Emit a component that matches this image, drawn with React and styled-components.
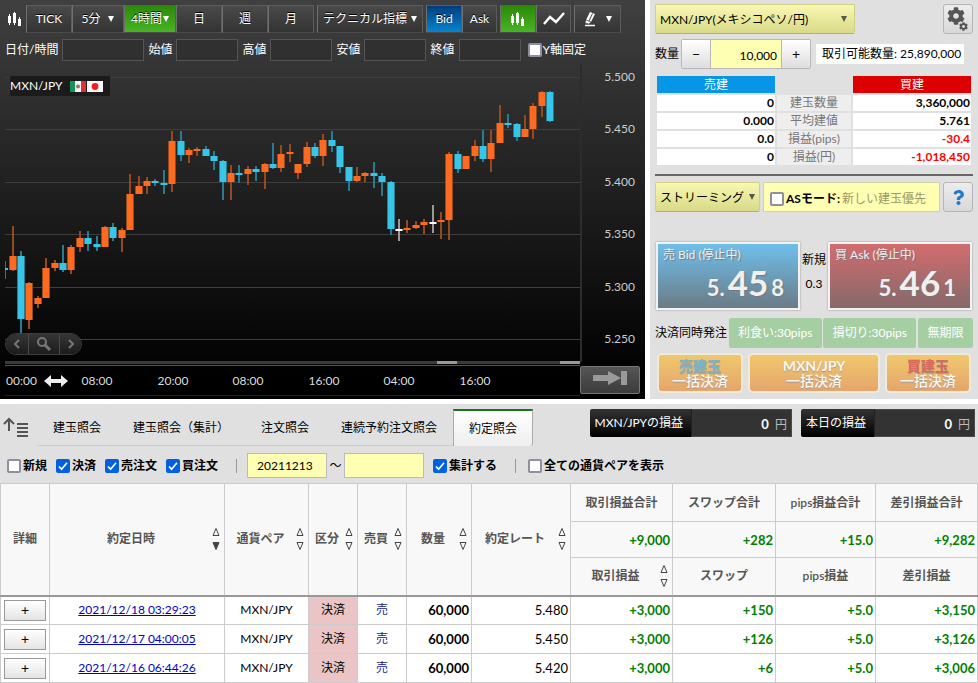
import React from "react";
import styled, { createGlobalStyle } from "styled-components";
import { FaCog, FaQuestion } from "react-icons/fa";

const GlobalStyle = createGlobalStyle`
  * {
    box-sizing: border-box;
  }
  body {
    margin: 0;
    background: #fff;
    color: #000;
    font-family: Lato, "Noto Sans CJK JP", sans-serif;
    font-size: 12px;
    line-height: 16px;
  }
  button,
  input,
  select {
    font: inherit;
    color: inherit;
    margin: 0;
  }
`;

const Page = styled.div`
  display: flex;
  flex-direction: column;
  gap: 5px;
`;
const Top = styled.div`
  display: flex;
  gap: 5px;
`;

/* chart panel */
const ChartPanel = styled.section`
  flex: 1;
  min-width: 0;
  display: flex;
  flex-direction: column;
  background: linear-gradient(#404040, #2b2b2b 30%, #000 95%);
  color: #fff;
`;
const Toolbar = styled.div`
  display: flex;
  align-items: center;
  gap: 3px;
  padding: 5px 5px 0 7px;
`;
const ToolGroup = styled.div`
  display: flex;
`;
const toolColors = {
  gray: "linear-gradient(#4a4a4a, #333)",
  green: "linear-gradient(#2b8a08, #48b524)",
  blue: "linear-gradient(#003d80, #0784cf)",
};
const ToolButton = styled.button`
  display: flex;
  align-items: center;
  justify-content: center;
  gap: ${({ $gap }) => $gap || 4}px;
  width: ${({ $w }) => $w}px;
  height: 28px;
  padding: 0;
  border: 1px solid #5c5c5c;
  border-left-color: #707070;
  border-bottom-color: #4a4a4a;
  background: ${({ $tone }) => toolColors[$tone || "gray"]};
  color: #fff;
  white-space: nowrap;
  text-shadow: 0 -1px 0 #000;
`;
const OhlcRow = styled.div`
  display: flex;
  align-items: center;
  padding: 6px 5px 0 0;
`;
const OhlcLabel = styled.label`
  display: flex;
  align-items: center;
  gap: 4px;
  margin-left: 5px;
  white-space: nowrap;
  & + & {
    margin-left: 4px;
  }
`;
const OhlcInput = styled.input`
  width: ${({ $w }) => $w || 62}px;
  height: 22px;
  border: 1px solid #555;
  background: #303030;
`;
const Check = styled.input`
  appearance: none;
  flex: none;
  width: 14px;
  height: 14px;
  border: 2px solid #8f8f9d;
  border-radius: 2px;
  background: #fff;
  &:checked {
    border-color: #0060df;
    background: #0060df
      url("data:image/svg+xml,%3Csvg xmlns='http://www.w3.org/2000/svg' viewBox='0 0 10 10'%3E%3Cpath d='M1 5.5l2.6 2.7L9 1.8' fill='none' stroke='white' stroke-width='1.7'/%3E%3C/svg%3E")
      center / 10px no-repeat;
  }
`;
const FixLabel = styled.label`
  display: flex;
  align-items: center;
  gap: 1px;
  margin-left: 7px;
`;
const ChartBody = styled.div`
  position: relative;
  padding-top: 4px;
`;
const ChartSvg = styled.svg`
  display: block;
  width: 100%;
`;
const PairTag = styled.div`
  position: absolute;
  left: 10px;
  top: 15px;
  display: flex;
  align-items: center;
  gap: 8px;
  height: 20px;
  padding-right: 7px;
  background: #1b1b1b;
`;
const ZoomBar = styled.div`
  position: absolute;
  left: 5px;
  bottom: 11px;
  display: flex;
  border: 1px solid #3c3c3c;
  border-radius: 11px;
  overflow: hidden;
`;
const ZoomButton = styled.button`
  display: flex;
  align-items: center;
  justify-content: center;
  width: ${({ $w }) => $w}px;
  height: 20px;
  padding: 0;
  border: 0;
  border-left: 1px solid #484848;
  background: linear-gradient(#353535, #1c1c1c);
  &:first-child {
    border-left: 0;
  }
`;
const TimeRow = styled.div`
  display: flex;
  align-items: flex-start;
  padding: 0 5px 3px 0;
`;
const TimeScale = styled.svg`
  flex: 1;
  min-width: 0;
  display: block;
`;
const LatestButton = styled.button`
  width: 60px;
  height: 28px;
  padding: 0;
  border: 1px solid #777;
  border-radius: 2px;
  background: linear-gradient(#555, #3c3c3c);
`;

/* order panel */
const OrderPanel = styled.section`
  width: 328px;
  flex: none;
  padding: 4px 5px 5px;
  background: #e0e0e0;
`;
const OrderRow = styled.div`
  display: flex;
  align-items: center;
  justify-content: ${({ $spread }) => ($spread ? "space-between" : "flex-start")};
  margin-top: ${({ $top }) => $top || 0}px;
  padding: 0 ${({ $inset }) => $inset || 0}px;
`;
const SelectWrap = styled.label`
  display: flex;
  position: relative;
  &::after {
    content: "";
    position: absolute;
    right: ${({ $arrow }) => $arrow}px;
    top: 12px;
    border: 3px solid transparent;
    border-top: 6px solid #555;
    border-bottom: 0;
  }
`;
const Select = styled.select`
  appearance: none;
  width: ${({ $w }) => $w}px;
  height: 30px;
  padding: 2px 4px 0;
  border: 1px solid #d0d080;
  border-bottom-color: #aaa;
  border-radius: 2px;
  background: linear-gradient(#f8f8b4, #d9d988);
`;
const IconButton = styled.button`
  display: flex;
  align-items: center;
  justify-content: center;
  width: 30px;
  height: 30px;
  padding: 0;
  border: 1px solid #b5b5b5;
  border-radius: 3px;
  background: linear-gradient(#ededed, #d8d8d8);
`;
const Stepper = styled.div`
  display: flex;
  margin: 0 5px 0 2px;
  border: 1px solid #b8b8b8;
  border-radius: 2px;
`;
const StepButton = styled.button`
  width: 28px;
  height: 28px;
  padding: 0;
  border: 0;
  background: linear-gradient(#fff, #dedede);
  font-size: 14px;
`;
const QtyInput = styled.input`
  width: 72px;
  height: 28px;
  padding: 2px 4px 0;
  border: 0;
  border-left: 1px solid #b8b8b8;
  border-right: 1px solid #b8b8b8;
  background: #ffffb4;
  text-align: right;
`;
const Available = styled.div`
  padding: 2px 3px 2px 6px;
  background: #fff;
  white-space: nowrap;
`;
const PositionTable = styled.table`
  width: 100%;
  margin-top: 5px;
  border-collapse: separate;
  border-spacing: 2px;
  table-layout: fixed;
  line-height: 16px;
  th,
  td {
    height: 16px;
    padding: 0;
    overflow: hidden;
    font-weight: normal;
  }
`;
const SideHead = styled.th`
  background: ${({ $buy }) => ($buy ? "#dc0000" : "#0796e6")};
  color: #fff;
  line-height: 17px;
`;
const PositionCell = styled.td`
  background: #fff;
  color: ${({ $minus }) => ($minus ? "#f00" : "#000")};
  text-align: right;
  b {
    padding-right: 1px;
    font-weight: 700;
  }
`;
const PositionName = styled.th`
  background: #eee;
  color: #777;
`;
const Rule = styled.hr`
  height: 2px;
  margin: 7px 0 6px;
  border: 0;
  background: #666;
`;
const AsMode = styled.label`
  display: flex;
  align-items: center;
  width: 177px;
  height: 30px;
  padding: 3px 6px 0;
  border: 1px solid #d2d2a8;
  background: #ffffb4;
  color: #999966;
  white-space: nowrap;
  b {
    margin: 0 2px;
    color: #000;
  }
`;
const PriceRow = styled.div`
  display: flex;
  justify-content: space-between;
  margin: 30px 0 8px;
  padding: 0 1px;
`;
const PriceButton = styled.button`
  width: 144px;
  height: 68px;
  padding: 3px 5px;
  border: 2px solid #f2f2f2;
  background: ${({ $buy }) =>
    $buy ? "linear-gradient(#d26c6e, #86696a)" : "linear-gradient(#6fbfeb, #6b7b86)"};
  box-shadow: 0 0 2px #999;
  color: #f0f0f0;
  text-align: left;
  text-shadow: 1px 1px 1px #777;
`;
const Price = styled.div`
  display: flex;
  justify-content: flex-end;
  align-items: baseline;
  gap: 3px;
  padding-right: 9px;
  font-size: 22px;
  font-weight: 700;
  line-height: 38px;
`;
const BigDigits = styled.span`
  font-size: 35px;
`;
const Spread = styled.div`
  display: flex;
  flex-direction: column;
  align-items: center;
  gap: 8px;
  padding-top: 10px;
  white-space: nowrap;
`;
const CloseOption = styled.button`
  width: ${({ $w }) => $w}px;
  height: 30px;
  padding: 0;
  border: 0;
  border-radius: 2px;
  background: #a6cea3;
  color: #fff;
  white-space: nowrap;
`;
const CloseButton = styled.button`
  display: flex;
  flex-direction: column;
  align-items: center;
  justify-content: center;
  width: ${({ $w }) => $w}px;
  height: 40px;
  padding: 0;
  border: 2px solid #f0ead8;
  border-radius: 5px;
  background: linear-gradient(#f0c86c, #e6a56c);
  color: #fcf7ec;
  font-size: 14px;
  font-weight: 500;
  line-height: 15px;
  text-shadow: 0 1px 1px #999;
  strong {
    color: ${({ $accent }) => $accent || "#fcf7ec"};
    font-weight: 700;
  }
`;

/* list panel */
const ListPanel = styled.section`
  background: #e0e0e0;
`;
const TabRow = styled.div`
  display: flex;
  align-items: flex-start;
  padding: 5px 3px 0 3px;
`;
const Tabs = styled.nav`
  display: flex;
  margin-left: 7px;
`;
const Tab = styled.button`
  height: 37px;
  padding: 1px 16px 0;
  border: 0;
  border-bottom: 1px solid #ccc;
  background: none;
  white-space: nowrap;
  ${({ $active }) =>
    $active &&
    `
    padding: 0 15px;
    border: 1px solid #aaa;
    border-top: 2px solid #1c721c;
    border-bottom: 0;
    border-radius: 0 0 3px 0;
    background: linear-gradient(#fff, #eee);
  `}
`;
const Totals = styled.div`
  display: flex;
  gap: 9px;
  margin-left: auto;
`;
const Total = styled.div`
  display: flex;
  height: 28px;
  border-radius: 2px;
  background: linear-gradient(#333, #000);
  color: #fff;
  line-height: 28px;
  white-space: nowrap;
`;
const TotalName = styled.span`
  padding: 0 8px 0 5px;
`;
const TotalValue = styled.span`
  width: 101px;
  padding-right: 4px;
  border: 1px solid #4a4a4a;
  border-left-color: #222;
  background: #333;
  color: #bbb;
  text-align: right;
  b {
    margin-right: 3px;
    color: #fff;
    font-size: 13px;
  }
`;
const FilterRow = styled.div`
  display: flex;
  align-items: center;
  height: 37px;
  padding: 2px 7px 0;
`;
const DateInput = styled.input`
  width: 80px;
  height: 25px;
  padding: 0 9px;
  border: 1px solid #bbb;
  background: #ffffb4;
`;
const FilterLabel = styled.label`
  display: flex;
  align-items: center;
  gap: 2px;
  margin-right: 9px;
  font-weight: 600;
  white-space: nowrap;
  ${DateInput} + & {
    margin-left: 9px;
  }
`;
const Divider = styled.span`
  width: 1px;
  height: 14px;
  margin: 0 ${({ $right }) => $right}px 0 9px;
  background: #999;
`;
const Tilde = styled.span`
  width: 17px;
  text-align: center;
`;
const Table = styled.table`
  width: 100%;
  border-collapse: collapse;
  table-layout: fixed;
  background: #fff;
`;
const Th = styled.th`
  height: ${({ $h }) => $h || 36}px;
  padding: 0;
  border: 1px solid #ccc;
  border-bottom: ${({ $last }) => ($last ? "2px solid #999" : "1px solid #ccc")};
  background: #f8f8f8;
  color: #555;
  font-weight: 600;
  white-space: nowrap;
`;
const ThInner = styled.div`
  display: flex;
  align-items: center;
  justify-content: center;
`;
const ThText = styled.span`
  flex: 1;
`;
const SortIcon = styled.svg`
  flex: none;
  width: 8px;
  height: 24px;
  margin-right: 4px;
`;
const Td = styled.td`
  height: ${({ $h }) => $h || 29}px;
  padding: 0 2px;
  border: 1px solid #ccc;
  background: ${({ $bg }) => $bg || "#fff"};
  color: ${({ $color }) => $color || "#000"};
  font-size: ${({ $number }) => ($number ? 13 : 12)}px;
  font-weight: ${({ $bold }) => ($bold ? 700 : 400)};
  text-align: ${({ $number }) => ($number ? "right" : "center")};
  white-space: nowrap;
  a {
    color: #0000c8;
  }
`;
const DetailButton = styled.button`
  display: block;
  width: 42px;
  height: 21px;
  margin: 0 auto;
  padding: 0;
  border: 1px solid #999;
  background: linear-gradient(#fff, #e4e4e4);
  font-size: 14px;
  line-height: 16px;
`;

// colour, high, body top, body bottom, low
const candles = [
  ["o", 226, 256, 270, 271], ["b", 251, 256, 319, 336], ["o", 282, 283, 320, 329],
  ["o", 296, 298, 304, 308], ["o", 258, 268, 298, 298], ["o", 260, 263, 268, 271],
  ["b", 245, 263, 270, 272], ["o", 245, 247, 270, 274], ["o", 231, 238, 247, 252],
  ["b", 231, 238, 244, 251], ["b", 236, 244, 247, 251], ["o", 226, 227, 247, 247],
  ["b", 223, 227, 238, 241], ["o", 228, 230, 238, 252], ["o", 174, 194, 230, 230],
  ["o", 176, 186, 194, 194], ["o", 177, 181, 186, 194], ["b", 179, 181, 183, 186],
  ["b", 170, 183, 185, 194], ["o", 131, 141, 184, 192], ["b", 131, 141, 155, 161],
  ["o", 148, 150, 155, 163], ["o", 147, 149, 151, 156], ["b", 146, 149, 156, 156],
  ["b", 151, 156, 161, 170], ["b", 160, 161, 182, 200], ["o", 165, 173, 182, 200],
  ["b", 165, 173, 175, 183], ["o", 166, 169, 174, 185], ["b", 166, 169, 172, 181],
  ["o", 163, 164, 172, 189], ["b", 143, 164, 168, 169], ["o", 145, 154, 168, 172],
  ["o", 144, 152, 154, 162], ["o", 164, 164, 173, 179], ["o", 142, 147, 164, 167],
  ["b", 143, 147, 156, 158], ["o", 134, 140, 156, 166], ["b", 131, 140, 146, 152],
  ["b", 146, 146, 167, 173], ["b", 167, 167, 181, 191], ["o", 167, 176, 181, 182],
  ["o", 172, 173, 176, 182], ["b", 162, 173, 176, 188], ["b", 173, 176, 182, 196],
  ["b", 181, 182, 229, 235], ["w", 219, 229, 231, 241], ["o", 220, 228, 230, 233],
  ["o", 221, 225, 228, 229], ["o", 219, 222, 225, 234], ["w", 205, 222, 224, 233],
  ["o", 212, 220, 222, 239], ["o", 152, 154, 220, 240], ["b", 151, 154, 169, 173],
  ["o", 156, 156, 169, 169], ["o", 140, 146, 156, 161], ["b", 130, 146, 159, 162],
  ["o", 130, 143, 159, 172], ["o", 105, 123, 143, 143], ["b", 114, 123, 125, 128],
  ["b", 123, 124, 137, 141], ["o", 115, 129, 137, 137], ["o", 103, 106, 129, 139],
  ["o", 91, 92, 106, 117], ["b", 91, 92, 121, 122],
];
const bodyColors = { o: "#ff6a21", b: "#37c6e8", w: "#fff" };
const wickColors = { o: "#94491f", b: "#2b7b90", w: "#999" };

const prices = ["5.500", "5.450", "5.400", "5.350", "5.300", "5.250"];
const times = ["08:00", "20:00", "08:00", "16:00", "04:00", "16:00"];

const Chart = () => (
  <ChartSvg viewBox="0 65 645 301">
    {prices.map((price, i) => {
      const y = Math.round(77 + i * 52.4);
      return (
        <g key={price}>
          <rect x="5" y={y} width="576" height="1" fill="#3e3e3e" />
          <text x="635" y={y + 4} textAnchor="end" fontSize="12" fill="#ccc">
            {price}
          </text>
        </g>
      );
    })}
    <rect x="580" y="65" width="2" height="297" fill="#2c2c2c" />
    <rect x="5" y="261" width="1" height="18" fill={wickColors.b} />
    <rect x="5" y="268" width="3" height="2" fill={bodyColors.b} />
    {candles.map(([c, high, top, bottom, low], i) => {
      const x = Math.floor(13 + i * 8.4);
      return (
        <g key={i}>
          <rect x={x - 1} y={high} width="2" height={low - high} fill={wickColors[c]} />
          <rect x={x - 4} y={top} width="8" height={bottom - top} fill={wickColors[c]} />
          <rect x={x - 3} y={top} width="6" height={bottom - top} fill={bodyColors[c]} />
        </g>
      );
    })}
    <rect x="5" y="361" width="575" height="3" fill="#393939" />
    <rect x="5" y="365" width="575" height="1" fill="#555" />
    <rect x="437" y="361" width="20" height="3" fill="#999" />
    <rect x="560" y="361" width="20" height="3" fill="#999" />
  </ChartSvg>
);

const Candles = () => (
  <svg width="16" height="18" viewBox="0 0 16 18" fill="#fff">
    <path d="M2 4h1v2h1v7H3v2H2v-2H1V6h1zM7 2h1v1h1v10H8v2H7v-2H6V3h1zM12 7h1v2h1v7h-3V9h1z" />
  </svg>
);

const Caret = () => (
  <svg width="6" height="6" viewBox="0 0 6 6" fill="#fff">
    <path d="M0 0h6L3 6z" />
  </svg>
);

const Flags = () => (
  <svg width="33" height="11" viewBox="0 0 33 11">
    <rect width="5" height="11" fill="#15935a" />
    <rect x="5" width="6" height="11" fill="#f4f4f4" />
    <rect x="11" width="5" height="11" fill="#e0313a" />
    <circle cx="8" cy="5.5" r="2" fill="#8f7a55" />
    <rect x="17" width="16" height="11" fill="#f8f8f8" />
    <circle cx="25" cy="5.5" r="3.4" fill="#f02020" />
  </svg>
);

const Sort = ({ down }) => (
  <SortIcon viewBox="0 0 8 24" fill="none" stroke="#444">
    <path d="M1 8.5h6L4 1.5z" />
    <path d="M1 15.5h6L4 22.5z" fill={down ? "#444" : "none"} />
  </SortIcon>
);

const positions = [
  ["0", "建玉数量", "3,360,000"],
  ["0.000", "平均建値", "5.761"],
  ["0.0", "損益(pips)", "-30.4"],
  ["0", "損益(円)", "-1,018,450"],
];

const sortHeads = [
  { name: "約定日時", down: true },
  { name: "通貨ペア" },
  { name: "区分" },
  { name: "売買" },
  { name: "数量" },
  { name: "約定レート" },
];
const widths = [49, 175, 84, 49, 49, 65, 99, 102, 103, 100];

const trades = [
  { date: "2021/12/18 03:29:23", rate: "5.480", pl: ["+3,000", "+150", "+5.0", "+3,150"] },
  { date: "2021/12/17 04:00:05", rate: "5.450", pl: ["+3,000", "+126", "+5.0", "+3,126"] },
  { date: "2021/12/16 06:44:26", rate: "5.420", pl: ["+3,000", "+6", "+5.0", "+3,006"] },
];

const App = () => {
  return (
    <Page>
      <GlobalStyle />
      <Top>
        <ChartPanel>
          <Toolbar>
            <Candles />
            <ToolGroup>
              <ToolButton $w={46}>TICK</ToolButton>
              <ToolButton $w={52} $gap={8}>5分 <Caret /></ToolButton>
              <ToolButton $w={52} $gap={1} $tone="green">4時間 <Caret /></ToolButton>
              <ToolButton $w={46}>日</ToolButton>
              <ToolButton $w={46}>週</ToolButton>
              <ToolButton $w={46}>月</ToolButton>
            </ToolGroup>
            <ToolButton $w={106}>テクニカル指標 <Caret /></ToolButton>
            <ToolGroup>
              <ToolButton $w={36} $tone="blue">Bid</ToolButton>
              <ToolButton $w={35}>Ask</ToolButton>
            </ToolGroup>
            <ToolGroup>
              <ToolButton $w={36} $tone="green" aria-label="ローソク足"><Candles /></ToolButton>
              <ToolButton $w={35} aria-label="ライン">
                <svg width="22" height="14" viewBox="0 0 22 14" fill="none" stroke="#fff" strokeWidth="2.4">
                  <path d="M1 12l6-7 6 5 8-9" />
                </svg>
              </ToolButton>
            </ToolGroup>
            <ToolButton $w={47} $gap={8} aria-label="描画">
              <svg width="14" height="16" viewBox="0 0 14 16">
                <path d="M6 1l5 2-4 8-5-2z" fill="#fff" />
                <path d="M8.500 2.500L5 10" stroke="#444" />
                <path d="M2 9l-1 3 4 1 2-2z" fill="#fff" stroke="#444" strokeWidth="0.6" />
                <path d="M1 14.500h10" stroke="#fff" strokeWidth="1.5" />
              </svg>
              <Caret />
            </ToolButton>
          </Toolbar>
          <OhlcRow>
            <OhlcLabel>日付/時間<OhlcInput $w={82} /></OhlcLabel>
            <OhlcLabel>始値<OhlcInput /></OhlcLabel>
            <OhlcLabel>高値<OhlcInput /></OhlcLabel>
            <OhlcLabel>安値<OhlcInput /></OhlcLabel>
            <OhlcLabel>終値<OhlcInput /></OhlcLabel>
            <FixLabel><Check type="checkbox" />Y軸固定</FixLabel>
          </OhlcRow>
          <ChartBody>
            <Chart />
            <PairTag>MXN/JPY <Flags /></PairTag>
            <ZoomBar>
              <ZoomButton $w={22} aria-label="前へ">
                <svg width="8" height="12" fill="none" stroke="#777" strokeWidth="2"><path d="M6 2L2 6l4 4" /></svg>
              </ZoomButton>
              <ZoomButton $w={31} aria-label="ズーム">
                <svg width="16" height="16" fill="none" stroke="#777" strokeWidth="2">
                  <circle cx="6" cy="6" r="4" /><path d="M9 9l5 5" strokeWidth="3" />
                </svg>
              </ZoomButton>
              <ZoomButton $w={22} aria-label="次へ">
                <svg width="8" height="12" fill="none" stroke="#777" strokeWidth="2"><path d="M2 2l4 4-4 4" /></svg>
              </ZoomButton>
            </ZoomBar>
          </ChartBody>
          <TimeRow>
            <TimeScale viewBox="0 0 580 30" fontSize="12" fill="#ddd">
              <text x="6" y="19">00:00</text>
              <path d="M44 15l7-6v4h10V9l7 6-7 6v-4H51v4z" fill="#eee" />
              {times.map((time, i) => (
                <text key={i} x={97 + Math.round(i * 75.5)} y="19" textAnchor="middle">
                  {time}
                </text>
              ))}
              <rect x="5" y="29" width="575" height="1" fill="#222" />
            </TimeScale>
            <LatestButton aria-label="最新">
              <svg width="36" height="16" fill="#999">
                <path d="M1 5h15V1l13 7-13 7v-4H1zM29 1h6v14h-6z" />
              </svg>
            </LatestButton>
          </TimeRow>
        </ChartPanel>

        <OrderPanel>
          <OrderRow $spread>
            <SelectWrap $arrow={8}>
              <Select $w={200} aria-label="通貨ペア"><option>MXN/JPY(メキシコペソ/円)</option></Select>
            </SelectWrap>
            <IconButton aria-label="設定">
              <svg width="22" height="26" viewBox="0 0 22 26" color="#555">
                <FaCog x="0" y="1" size={18} />
                <FaCog x="12" y="16" size={9} />
              </svg>
            </IconButton>
          </OrderRow>
          <OrderRow $top={5}>
            <label htmlFor="qty">数量</label>
            <Stepper>
              <StepButton>−</StepButton>
              <QtyInput id="qty" defaultValue="10,000" />
              <StepButton>+</StepButton>
            </Stepper>
            <Available>取引可能数量: 25,890,000</Available>
          </OrderRow>
          <PositionTable>
            <colgroup>
              <col width="118" />
              <col width="74" />
              <col width="118" />
            </colgroup>
            <thead>
              <tr>
                <SideHead>売建</SideHead>
                <th />
                <SideHead $buy>買建</SideHead>
              </tr>
            </thead>
            <tbody>
              {positions.map(([sell, name, buy]) => (
                <tr key={name}>
                  <PositionCell><b>{sell}</b></PositionCell>
                  <PositionName>{name}</PositionName>
                  <PositionCell $minus={buy.startsWith("-")}><b>{buy}</b></PositionCell>
                </tr>
              ))}
            </tbody>
          </PositionTable>
          <Rule />
          <OrderRow $spread>
            <SelectWrap $arrow={5}>
              <Select $w={105} aria-label="注文方式"><option>ストリーミング</option></Select>
            </SelectWrap>
            <AsMode>
              <Check type="checkbox" />
              <b>ASモード:</b>新しい建玉優先
            </AsMode>
            <IconButton aria-label="ヘルプ"><FaQuestion size={15} color="#2478d0" /></IconButton>
          </OrderRow>
          <PriceRow>
            <PriceButton>
              売 Bid (停止中)
              <Price><span>5.</span><BigDigits>45</BigDigits><span>8</span></Price>
            </PriceButton>
            <Spread><span>新規</span><span>0.3</span></Spread>
            <PriceButton $buy>
              買 Ask (停止中)
              <Price><span>5.</span><BigDigits>46</BigDigits><span>1</span></Price>
            </PriceButton>
          </PriceRow>
          <OrderRow $spread>
            決済同時発注
            <CloseOption $w={93}>利食い:30pips</CloseOption>
            <CloseOption $w={93}>損切り:30pips</CloseOption>
            <CloseOption $w={55}>無期限</CloseOption>
          </OrderRow>
          <OrderRow $spread $top={5} $inset={2}>
            <CloseButton $w={86} $accent="#7db4c4"><strong>売建玉</strong><span>一括決済</span></CloseButton>
            <CloseButton $w={132}><strong>MXN/JPY</strong><span>一括決済</span></CloseButton>
            <CloseButton $w={86} $accent="#d86a5c"><strong>買建玉</strong><span>一括決済</span></CloseButton>
          </OrderRow>
        </OrderPanel>
      </Top>

      <ListPanel>
        <TabRow>
          <svg width="27" height="32" viewBox="0 0 27 32" fill="none" stroke="#555" strokeWidth="2">
            <path d="M6 22V11M1 15l5-5 5 5M14 15h11M14 19h11M14 23h11M14 27h11" />
          </svg>
          <Tabs>
            <Tab>建玉照会</Tab>
            <Tab>建玉照会（集計）</Tab>
            <Tab>注文照会</Tab>
            <Tab>連続予約注文照会</Tab>
            <Tab $active>約定照会</Tab>
          </Tabs>
          <Totals>
            <Total>
              <TotalName>MXN/JPYの損益</TotalName>
              <TotalValue><b>0</b> 円</TotalValue>
            </Total>
            <Total>
              <TotalName>本日の損益</TotalName>
              <TotalValue><b>0</b> 円</TotalValue>
            </Total>
          </Totals>
        </TabRow>
        <FilterRow>
          <FilterLabel><Check type="checkbox" />新規</FilterLabel>
          <FilterLabel><Check type="checkbox" defaultChecked />決済</FilterLabel>
          <FilterLabel><Check type="checkbox" defaultChecked />売注文</FilterLabel>
          <FilterLabel><Check type="checkbox" defaultChecked />買注文</FilterLabel>
          <Divider $right={10} />
          <DateInput defaultValue="20211213" aria-label="開始日" />
          <Tilde>～</Tilde>
          <DateInput aria-label="終了日" />
          <FilterLabel><Check type="checkbox" defaultChecked />集計する</FilterLabel>
          <Divider $right={12} />
          <FilterLabel><Check type="checkbox" />全ての通貨ペアを表示</FilterLabel>
        </FilterRow>
        <Table>
          <colgroup>
            {widths.map((w, i) => (
              <col key={i} width={w} />
            ))}
            <col />
          </colgroup>
          <thead>
            <tr>
              <Th rowSpan={3} $last>詳細</Th>
              {sortHeads.map(({ name, down }) => (
                <Th key={name} rowSpan={3} $last>
                  <ThInner><ThText>{name}</ThText><Sort down={down} /></ThInner>
                </Th>
              ))}
              <Th $h={38}>取引損益合計</Th>
              <Th>スワップ合計</Th>
              <Th>pips損益合計</Th>
              <Th>差引損益合計</Th>
            </tr>
            <tr>
              {["+9,000", "+282", "+15.0", "+9,282"].map((sum) => (
                <Td key={sum} $h={36} $bg="#f8f8f8" $color="#008000" $number $bold>{sum}</Td>
              ))}
            </tr>
            <tr>
              <Th $h={38} $last><ThInner><ThText>取引損益</ThText><Sort /></ThInner></Th>
              <Th $last>スワップ</Th>
              <Th $last>pips損益</Th>
              <Th $last>差引損益</Th>
            </tr>
          </thead>
          <tbody>
            {trades.map(({ date, rate, pl }) => (
              <tr key={date}>
                <Td><DetailButton aria-label="詳細">+</DetailButton></Td>
                <Td><a href="#detail">{date}</a></Td>
                <Td>MXN/JPY</Td>
                <Td $bg="#ebc5c5">決済</Td>
                <Td $color="#22228c">売</Td>
                <Td $number $bold>60,000</Td>
                <Td $number>{rate}</Td>
                {pl.map((value, i) => (
                  <Td key={i} $color="#008000" $number $bold>{value}</Td>
                ))}
              </tr>
            ))}
          </tbody>
        </Table>
      </ListPanel>
    </Page>
  );
};

export default App;
